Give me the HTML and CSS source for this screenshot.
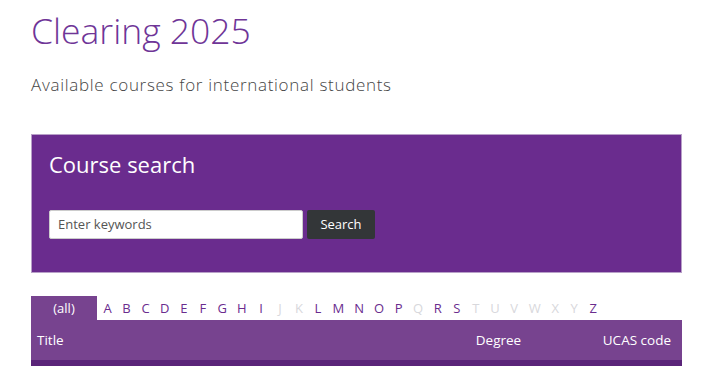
FILE: index.html
```html
<!DOCTYPE html>
<html lang="en">
<head>
    <meta charset="UTF-8">
    <meta name="viewport" content="width=device-width, initial-scale=1.0">
    <title>Clearing 2025</title>
    <link rel="stylesheet" href="styles.css">
</head>
<body>
    <div class="page">
        <h1 class="page-title">Clearing 2025</h1>
        <p class="intro">Available courses for international students</p>

        <div class="search-box">
            <h2>Course search</h2>
            <form class="search-form">
                <input type="text" placeholder="Enter keywords">
                <button type="button" class="btn">Search</button>
            </form>
        </div>

        <div class="course-list">
            <div class="letters">
                <a class="tab active">(all)</a>
                <a>A</a><a>B</a><a>C</a><a>D</a><a>E</a><a>F</a><a>G</a><a>H</a><a>I</a>
                <span class="off">J</span><span class="off">K</span>
                <a>L</a><a>M</a><a>N</a><a>O</a><a>P</a>
                <span class="off">Q</span>
                <a>R</a><a>S</a>
                <span class="off">T</span><span class="off">U</span><span class="off">V</span><span class="off">W</span><span class="off">X</span><span class="off">Y</span>
                <a>Z</a>
            </div>
            <div class="table-head">
                <span class="col-title">Title</span>
                <span class="col-degree">Degree</span>
                <span class="col-ucas">UCAS code</span>
            </div>
        </div>
    </div>
</body>
</html>
```

FILE: styles.css
```css
* {
    margin: 0;
    padding: 0;
    box-sizing: border-box;
}

body {
    font-family: 'Open Sans', 'Liberation Sans', sans-serif;
    color: #333;
    background: #fff;
}

.page {
    width: 651px;
    margin-left: 31px;
}

.page-title {
    font-size: 35.5px;
    font-weight: 300;
    color: #6f3597;
    line-height: 1;
    margin-top: 13px;
}

.intro {
    font-size: 17px;
    font-weight: 300;
    letter-spacing: 0.7px;
    color: #444;
    margin-top: 24px;
}

.search-box {
    margin-top: 38px;
    background: #6a2c8e;
    padding: 14px 17px 33px;
    border: 1px solid #b8a0c8;
}

.search-box h2 {
    font-size: 22px;
    font-weight: 400;
    color: #fff;
    line-height: 30px;
}

.search-form {
    display: flex;
    gap: 4px;
    margin-top: 31px;
}

.search-form input {
    width: 254px;
    height: 29px;
    border: 1px solid #ccc;
    border-radius: 2px;
    padding: 0 8px;
    font-family: inherit;
    font-size: 13px;
}

.search-form input::placeholder {
    color: #555;
}

.btn {
    width: 68px;
    height: 29px;
    background: #333638;
    color: #fff;
    border: none;
    border-radius: 2px;
    font-family: inherit;
    font-size: 13px;
}

.course-list {
    margin-top: 23px;
}

.letters {
    display: flex;
    align-items: center;
    height: 24px;
    font-size: 13px;
}

.letters a,
.letters span {
    color: #6a2c8e;
    padding: 0 5px;
    text-decoration: none;
    min-width: 19px;
    text-align: center;
}

.letters .off {
    color: #d8d8dc;
}

.letters .tab {
    background: #77438f;
    color: #fff;
    width: 66px;
    height: 24px;
    line-height: 24px;
    margin-right: 1px;
}

.table-head {
    display: flex;
    align-items: center;
    height: 46px;
    background: #77438f;
    border-bottom: 6px solid #5a2479;
    color: #fff;
    font-size: 13.5px;
    padding: 0 11px 0 6px;
}

.col-title {
    flex: 1;
}

.col-degree {
    width: 127px;
}
```
